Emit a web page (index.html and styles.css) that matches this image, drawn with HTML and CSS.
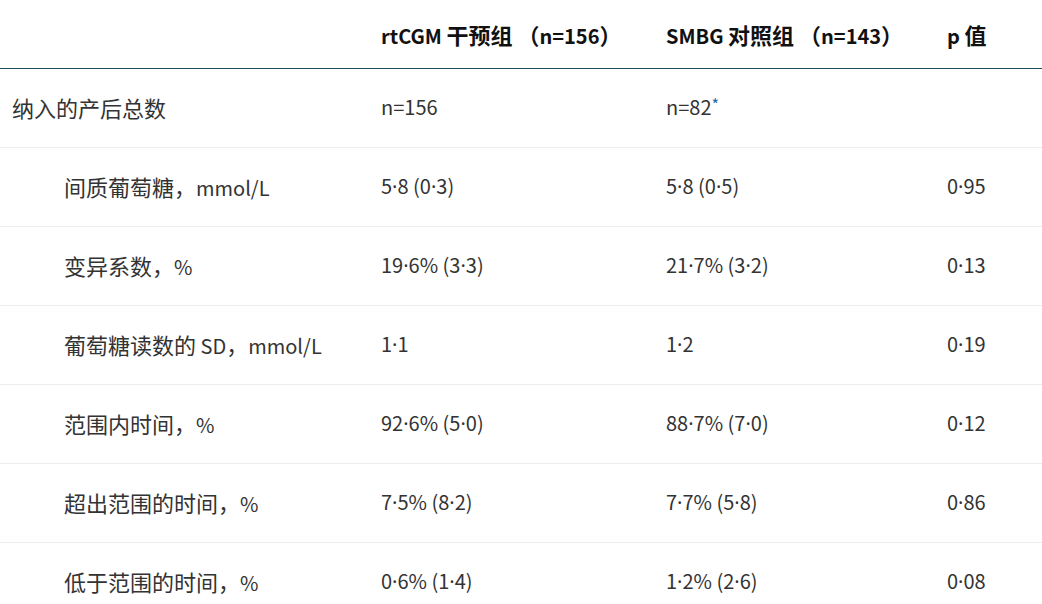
FILE: index.html
```html
<!DOCTYPE html>
<html lang="zh-CN">
<head>
<meta charset="utf-8">
<link rel="stylesheet" href="styles.css">
</head>
<body>
<table class="data">
  <colgroup>
    <col class="c1"><col class="c2"><col class="c3"><col class="c4">
  </colgroup>
  <thead>
    <tr>
      <th></th>
      <th>rtCGM <span class="zh">干预组 （</span>n=156<span class="zh">）</span></th>
      <th>SMBG <span class="zh">对照组 （</span>n=143<span class="zh">）</span></th>
      <th>p <span class="zh">值</span></th>
    </tr>
  </thead>
  <tbody>
    <tr>
      <td><span class="zh">纳入的产后总数</span></td>
      <td>n=156</td>
      <td>n=82<span class="star">*</span></td>
      <td></td>
    </tr>
    <tr>
      <td class="sub"><span class="zh">间质葡萄糖，</span>mmol/L</td>
      <td>5<span class="dot">·</span>8 (0<span class="dot">·</span>3)</td>
      <td>5<span class="dot">·</span>8 (0<span class="dot">·</span>5)</td>
      <td>0<span class="dot">·</span>95</td>
    </tr>
    <tr>
      <td class="sub"><span class="zh">变异系数，</span>%</td>
      <td>19<span class="dot">·</span>6% (3<span class="dot">·</span>3)</td>
      <td>21<span class="dot">·</span>7% (3<span class="dot">·</span>2)</td>
      <td>0<span class="dot">·</span>13</td>
    </tr>
    <tr>
      <td class="sub"><span class="zh">葡萄糖读数的</span> SD<span class="zh">，</span>mmol/L</td>
      <td>1<span class="dot">·</span>1</td>
      <td>1<span class="dot">·</span>2</td>
      <td>0<span class="dot">·</span>19</td>
    </tr>
    <tr>
      <td class="sub"><span class="zh">范围内时间，</span>%</td>
      <td>92<span class="dot">·</span>6% (5<span class="dot">·</span>0)</td>
      <td>88<span class="dot">·</span>7% (7<span class="dot">·</span>0)</td>
      <td>0<span class="dot">·</span>12</td>
    </tr>
    <tr>
      <td class="sub"><span class="zh">超出范围的时间，</span>%</td>
      <td>7<span class="dot">·</span>5% (8<span class="dot">·</span>2)</td>
      <td>7<span class="dot">·</span>7% (5<span class="dot">·</span>8)</td>
      <td>0<span class="dot">·</span>86</td>
    </tr>
    <tr>
      <td class="sub"><span class="zh">低于范围的时间，</span>%</td>
      <td>0<span class="dot">·</span>6% (1<span class="dot">·</span>4)</td>
      <td>1<span class="dot">·</span>2% (2<span class="dot">·</span>6)</td>
      <td>0<span class="dot">·</span>08</td>
    </tr>
  </tbody>
</table>
</body>
</html>
```

FILE: styles.css
```css
html, body {
  margin: 0;
  padding: 0;
  background: #fff;
}
body {
  font-family: "Noto Sans CJK SC", "Noto Sans", sans-serif;
  color: #333;
}
.data {
  width: 1042px;
  border-collapse: collapse;
  table-layout: fixed;
}
.c1 { width: 369px; }
.c2 { width: 285px; }
.c3 { width: 281px; }
.c4 { width: 107px; }
.data th {
  height: 68px;
  padding: 0 0 0 12px;
  text-align: left;
  font-size: 20px;
  font-weight: 700;
  color: #111;
  border-bottom: 1px solid #1f4d60;
  white-space: nowrap;
}
.data td {
  height: 75px;
  padding: 0 0 3px 12px;
  font-size: 20px;
  color: #333;
  border-bottom: 1px solid #ececec;
  white-space: nowrap;
}
.data td.sub {
  padding-left: 64px;
}
.zh {
  font-size: 22px;
}
.dot {
  font-family: "Noto Sans", sans-serif;
}
.star {
  color: #1f6aa5;
  font-size: 16px;
  position: relative;
  top: -4px;
}
```
